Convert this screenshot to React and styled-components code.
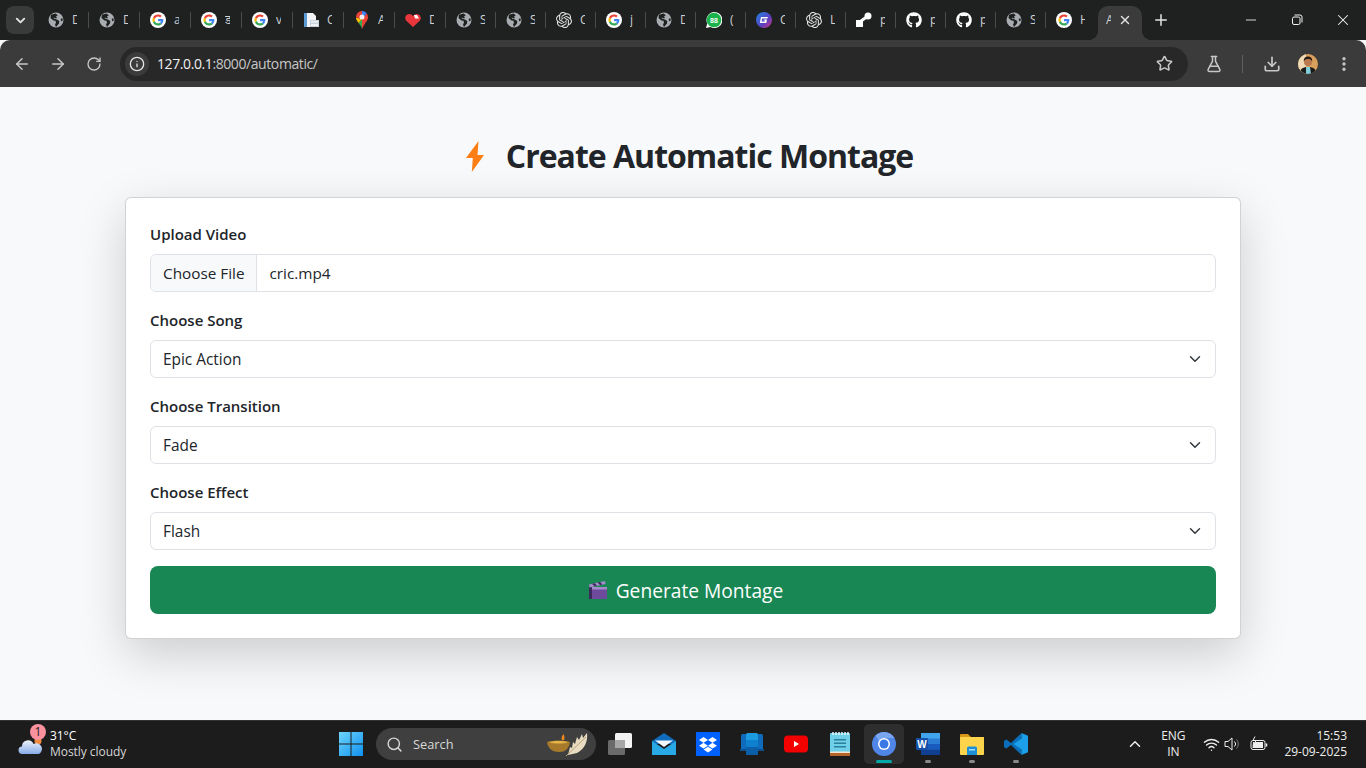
import React from "react";
import styled, { createGlobalStyle } from "styled-components";
import { SiOpenai } from "react-icons/si";
import { FaGithub } from "react-icons/fa";
import {
  ArrowLeft,
  ArrowRight,
  RotateCw,
  Info,
  Star,
  FlaskConical,
  Download,
  EllipsisVertical,
  ChevronDown,
  X,
  Plus,
  Minus,
  ChevronUp,
  Search,
  Wifi,
} from "lucide-react";

const UI_FONT = `"Open Sans", "Noto Sans", sans-serif`;

const GlobalStyle = createGlobalStyle`
  html, body { margin: 0; padding: 0; height: 100%; overflow: hidden; }
  body { font-family: ${UI_FONT}; background: #f8f9fa; color: #212529; }
  * { box-sizing: border-box; }
`;

const Screen = styled.div`
  height: 768px;
  display: flex;
  flex-direction: column;
  overflow: hidden;
`;

/* ---------- browser tabs ---------- */

const TabStrip = styled.div`
  height: 40px;
  flex: none;
  display: flex;
  align-items: center;
  background: #1f2120;
`;
const TabMenu = styled.div`
  width: 28px;
  height: 28px;
  margin: 0 4px 0 6px;
  border-radius: 8px;
  background: #393a3a;
  display: flex;
  align-items: center;
  justify-content: center;
  color: #e3e3e3;
`;
const Tab = styled.div`
  width: ${(p) => (p.$wide ? 51 : 50)}px;
  height: 40px;
  flex: none;
  display: flex;
  align-items: center;
  padding-left: 10px;
`;
const Favicon = styled.span`
  width: 16px;
  height: 16px;
  flex: none;
  display: flex;
  align-items: center;
  justify-content: center;
`;
const TabLetter = styled.span`
  width: 5px;
  margin-left: ${(p) => (p.$flush ? 0 : 8)}px;
  overflow: hidden;
  font-size: 12px;
  line-height: 16px;
  color: #d0d0d0;
  white-space: nowrap;
`;
const TabSep = styled.span`
  width: 1px;
  height: 16px;
  margin-left: auto;
  background: #4b4c4c;
`;
const ActiveTab = styled.div`
  position: relative;
  width: 44px;
  height: 34px;
  margin: 6px 0 0 2px;
  padding: 0 10px 6px 8px;
  flex: none;
  display: flex;
  align-items: center;
  justify-content: space-between;
  background: #3b3b3b;
  border-radius: 10px 10px 0 0;
  color: #e3e3e3;
  &::before,
  &::after {
    content: "";
    position: absolute;
    bottom: 0;
    width: 10px;
    height: 10px;
  }
  &::before {
    left: -10px;
    background: radial-gradient(circle at 0 0, transparent 10px, #3b3b3b 10.5px);
  }
  &::after {
    right: -10px;
    background: radial-gradient(circle at 100% 0, transparent 10px, #3b3b3b 10.5px);
  }
`;
const NewTab = styled.div`
  width: 24px;
  margin-left: 7px;
  display: flex;
  justify-content: center;
  color: #e3e3e3;
`;
const WindowButtons = styled.div`
  margin-left: auto;
  display: flex;
`;
const WindowButton = styled.div`
  width: 46px;
  height: 40px;
  display: flex;
  align-items: center;
  justify-content: center;
  color: #f2f2f2;
`;

/* ---------- browser toolbar ---------- */

const Toolbar = styled.div`
  height: 47px;
  flex: none;
  display: flex;
  align-items: center;
  padding-left: 8px;
  background: #3b3b3b;
  border-radius: 10px 10px 0 0;
`;
const NavButton = styled.div`
  width: 28px;
  height: 28px;
  margin-right: 8px;
  display: flex;
  align-items: center;
  justify-content: center;
  color: #c7c7c7;
`;
const Omnibox = styled.div`
  flex: 1;
  height: 34px;
  margin-left: 4px;
  padding: 0 15px 0 5px;
  display: flex;
  align-items: center;
  border-radius: 17px;
  background: #282828;
  color: #c7c7c7;
`;
const SiteInfo = styled.div`
  width: 24px;
  height: 24px;
  border-radius: 50%;
  background: #3b3b3b;
  display: flex;
  align-items: center;
  justify-content: center;
  color: #e3e3e3;
`;
const Url = styled.div`
  flex: 1;
  margin-left: 8px;
  font-size: 14px;
  letter-spacing: -0.41px;
  color: #c7c7c7;
`;
const Host = styled.span`
  color: #f1f1f1;
`;
const ToolActions = styled.div`
  width: 178px;
  flex: none;
  display: flex;
  align-items: center;
  color: #c7c7c7;
`;
const ToolIcon = styled.div`
  width: 20px;
  height: 20px;
  margin-left: ${(p) => p.$gap}px;
  display: flex;
  align-items: center;
  justify-content: center;
`;
const ToolSep = styled.span`
  width: 1px;
  height: 18px;
  margin-left: 18px;
  background: #5f5f5f;
`;

/* ---------- page ---------- */

const Main = styled.main`
  flex: 1;
  padding-top: 50px;
  background: #f8f9fa;
`;
const Title = styled.h2`
  margin: 0 0 22px;
  display: flex;
  justify-content: center;
  align-items: center;
  font-size: 32px;
  line-height: 38.4px;
  font-weight: 700;
  letter-spacing: -1px;
  color: #212529;
`;
const BoltBox = styled.span`
  width: 53px;
  height: 38px;
  flex: none;
  padding-left: 13px;
  display: flex;
  align-items: center;
`;
const Card = styled.form`
  width: 1116px;
  margin: 0 auto;
  padding: 24px;
  background: #fff;
  border: 1px solid rgba(0, 0, 0, 0.175);
  border-radius: 6px;
  box-shadow: 0 16px 48px rgba(0, 0, 0, 0.175);
`;
const Field = styled.div`
  margin-bottom: 16px;
`;
const Label = styled.label`
  display: block;
  margin-bottom: 8px;
  font-size: 15px;
  line-height: 24px;
  font-weight: 600;
  color: #212529;
`;
const FileControl = styled.div`
  height: 38px;
  display: flex;
  align-items: center;
  background: #fff;
  border: 1px solid #dee2e6;
  border-radius: 6px;
  overflow: hidden;
  font-size: 15.3px;
  color: #212529;
`;
const FileButton = styled.span`
  height: 100%;
  padding: 0 12px;
  display: flex;
  align-items: center;
  background: #f8f9fa;
  border-right: 1px solid #dee2e6;
`;
const FileName = styled.span`
  padding-left: 12px;
`;
const Select = styled.select`
  display: block;
  width: 100%;
  height: 38px;
  padding: 0 36px 0 12px;
  appearance: none;
  font-family: inherit;
  font-size: 15.4px;
  color: #212529;
  background-color: #fff;
  background-image: url("data:image/svg+xml,%3csvg xmlns='http://www.w3.org/2000/svg' viewBox='0 0 16 16'%3e%3cpath fill='none' stroke='%23343a40' stroke-linecap='round' stroke-linejoin='round' stroke-width='2' d='m2 5 6 6 6-6'/%3e%3c/svg%3e");
  background-repeat: no-repeat;
  background-position: right 12px center;
  background-size: 16px 12px;
  border: 1px solid #dee2e6;
  border-radius: 6px;
`;
const Submit = styled.button`
  width: 100%;
  height: 48px;
  padding: 0 0 0 5px;
  display: flex;
  align-items: center;
  justify-content: center;
  gap: 8px;
  border: 0;
  border-radius: 8px;
  background: #198754;
  color: #fff;
  font-family: inherit;
  font-size: 19.2px;
`;

/* ---------- windows taskbar ---------- */

const Taskbar = styled.footer`
  height: 48px;
  flex: none;
  padding-bottom: 1px;
  display: flex;
  align-items: center;
  background: #1c1c1c;
  border-top: 1px solid #333;
  color: #fff;
`;
const Weather = styled.div`
  position: relative;
  width: 339px;
  flex: none;
  padding-left: 18px;
  display: flex;
  align-items: center;
  gap: 7px;
`;
const Badge = styled.span`
  position: absolute;
  left: 30px;
  top: -4px;
  width: 16px;
  height: 16px;
  border-radius: 50%;
  background: #f9919e;
  color: #1c1c1c;
  font-size: 12px;
  line-height: 16px;
  text-align: center;
`;
const WeatherText = styled.div`
  font-size: 12px;
  line-height: 16px;
  letter-spacing: -0.05px;
`;
const Dim = styled.div`
  color: #d6d6d6;
`;
const Centre = styled.div`
  display: flex;
  align-items: center;
`;
const SearchPill = styled.div`
  width: 220px;
  height: 32px;
  margin: 0 2px 0 13px;
  padding: 0 4px 0 10px;
  display: flex;
  align-items: center;
  border-radius: 16px;
  background: #3f3f3f;
  color: #d8d8d8;
  font-size: 12.8px;
`;
const SearchLabel = styled.span`
  flex: 1;
  margin-left: 10px;
`;
const AppSlot = styled.div`
  position: relative;
  width: 40px;
  height: 40px;
  margin: 0 2px;
  display: flex;
  align-items: center;
  justify-content: center;
  border-radius: 5px;
  background: ${(p) => (p.$active ? "#2e2e2e" : "transparent")};
  &::after {
    content: "";
    display: ${(p) => (p.$state ? "block" : "none")};
    position: absolute;
    bottom: 1px;
    left: 50%;
    transform: translateX(-50%);
    width: ${(p) => (p.$state === "active" ? 16 : 6)}px;
    height: 3px;
    border-radius: 2px;
    background: ${(p) => (p.$state === "active" ? "#00a8a8" : "#8a8a8a")};
  }
`;
const Tray = styled.div`
  margin-left: auto;
  padding-right: 19px;
  display: flex;
  align-items: center;
  font-size: 12px;
  line-height: 16px;
  color: #eee;
`;
const Lang = styled.div`
  width: 30px;
  margin: 0 12px 0 14px;
  text-align: center;
`;
const TrayIcon = styled.span`
  width: 22px;
  margin-left: ${(p) => p.$gap || 0}px;
  display: flex;
  justify-content: center;
`;
const Clock = styled.div`
  margin-left: 14px;
  text-align: right;
`;

/* ---------- drawn favicons ---------- */

const Google = () => (
  <svg width="16" height="16" viewBox="0 0 16 16">
    <circle cx="8" cy="8" r="8" fill="#fff" />
    <g transform="translate(2.4 2.4) scale(0.233)">
      <path fill="#EA4335" d="M24 9.5c3.5 0 6.7 1.2 9.2 3.6l6.9-6.9C35.9 2.4 30.5 0 24 0 14.6 0 6.5 5.4 2.6 13.2l8 6.2C12.5 13.7 17.8 9.5 24 9.5z" />
      <path fill="#4285F4" d="M47 24.5c0-1.6-.1-3.1-.4-4.5H24v9h12.9c-.6 3-2.2 5.5-4.7 7.2l7.7 6C44.4 38 47 31.8 47 24.5z" />
      <path fill="#FBBC05" d="M10.5 28.6A14.5 14.5 0 0 1 10.5 19.4l-8-6.2a24 24 0 0 0 0 21.6z" />
      <path fill="#34A853" d="M24 48c6.5 0 11.9-2.1 15.9-5.8l-7.7-6c-2.2 1.500-4.900 2.300-8.200 2.300-6.200 0-11.500-4.200-13.400-9.900l-8 6.200C6.500 42.600 14.600 48 24 48z" />
    </g>
  </svg>
);

const Globe = () => (
  <svg width="16" height="16" viewBox="0 0 16 16">
    <circle cx="8" cy="8" r="7.5" fill="#a8abaf" />
    <path fill="#1f2120" d="M7.5 1.500 3 2.800 2.500 6 5.500 8.500l2 .3.5 2-1 1.700L8 15l3-3.500.3-2.500-3-1.800-1.800-.4L5.300 6l1.700-.3.5.8 1.500-.4L8 4.500l1.800-1.300zM14.500 6l-1.800 1 .5 2.200 1.500-.5z" />
  </svg>
);

const OpenAi = () => <SiOpenai size={16} color="#e4e4e4" />;

const GitHub = () => <FaGithub size={16} color="#fff" />;

const Doc = () => (
  <svg width="16" height="16" viewBox="0 0 16 16">
    <path fill="#f2f4f7" d="M1 1h9l3 3v11H1z" />
    <path fill="#5b9bd5" d="M1 1h3v14H1z" />
    <path fill="#c9d3de" d="M7 8h9v7H7z" />
    <path fill="#eef1f5" d="M8 9h7v1.500H8zM8 12h7v2H8z" />
  </svg>
);

const MapsPin = () => (
  <svg width="16" height="18" viewBox="0 0 16 18">
    <path fill="#34a853" d="M8 18c-.5-2.500-2-4-3.500-6L8 8z" />
    <path fill="#fbbc04" d="M4.500 12C3 10 2 8.500 2 6.500L8 8z" />
    <path fill="#4285f4" d="M8 0c2 0 3.800 1 4.800 2.500L8 8z" />
    <path fill="#ea4335" d="M12.800 2.500C13.600 3.500 14 5 14 6.500c0 2-1.500 4-3 6L8 18V8z" />
    <path fill="#ea4335" d="M3.200 2.500C4.300 1 6 0 8 0v8L2 6.500c0-1.500.5-3 1.200-4z" />
    <circle cx="8" cy="6" r="2.500" fill="#fff" opacity="0.9" />
  </svg>
);

const Heart = () => (
  <svg width="16" height="16" viewBox="0 0 16 16">
    <path fill="#e8363c" d="M8 15 1 8.500C-.5 6.500 0 2.500 4 2c1.700 0 3 .8 4 2 1-1.200 2.300-2 4-2 4 .5 4.500 4.500 3 6.500z" />
    <path fill="#fff" d="M9 3h3l2 3.500H10z" />
  </svg>
);

const WhatsApp = () => (
  <svg width="16" height="16" viewBox="0 0 16 16">
    <path fill="#fff" d="M0 16 1.200 11.500A8 8 0 1 1 4.500 15z" />
    <circle cx="8" cy="8" r="7.300" fill="#19b24b" />
    <text x="8" y="10.500" textAnchor="middle" fontSize="7" fontWeight="700" fill="#fff" fontFamily="Liberation Sans, sans-serif">88</text>
  </svg>
);

const GBadge = () => (
  <svg width="16" height="16" viewBox="0 0 16 16">
    <defs>
      <linearGradient id="gb" x1="0" y1="0" x2="1" y2="1">
        <stop offset="0" stopColor="#1e88e5" />
        <stop offset="0.6" stopColor="#5a3fc0" />
        <stop offset="1" stopColor="#e0357a" />
      </linearGradient>
    </defs>
    <circle cx="8" cy="8" r="8" fill="url(#gb)" />
    <path fill="#fff" d="M5 5h7l-.6 1.500H6.200L5.600 9.500h3.200l.2-1H7.500l.3-1H11l-.7 3.500H3.800z" />
  </svg>
);

const Notion = () => (
  <svg width="16" height="16" viewBox="0 0 16 16">
    <path fill="#fff" d="M0 8h7v7H0z" />
    <path d="M5 9 12 4" stroke="#fff" strokeWidth="3" />
    <circle cx="12" cy="4" r="3.500" fill="#fff" />
  </svg>
);

const TABS = [
  [Globe, "D"], [Globe, "D"], [Google, "a"], [Google, "ड"], [Google, "v"],
  [Doc, "C"], [MapsPin, "A"], [Heart, "D"], [Globe, "S"], [Globe, "S"],
  [OpenAi, "C"], [Google, "j"], [Globe, "D"], [WhatsApp, "("], [GBadge, "C"],
  [OpenAi, "L"], [Notion, "p"], [GitHub, "p"], [GitHub, "p"], [Globe, "S"],
  [Google, "H"],
];

const Restore = () => (
  <svg width="12" height="12" viewBox="0 0 12 12" fill="none" stroke="#f2f2f2">
    <rect x="1.500" y="3" width="7.500" height="7.500" rx="1.500" />
    <path d="M3.500 1h5.500a2 2 0 0 1 2 2v5.500" />
  </svg>
);

const Avatar = () => (
  <svg width="20" height="20" viewBox="0 0 20 20">
    <defs>
      <clipPath id="av"><circle cx="10" cy="10" r="10" /></clipPath>
    </defs>
    <g clipPath="url(#av)">
      <rect width="20" height="20" fill="#d9a05c" />
      <rect width="8" height="20" fill="#f0d9b5" />
      <path fill="#1b1b1b" d="M2 20c0-5 2-7 8-7s8 2 8 7z" />
      <path fill="#7fd0d8" d="M8 13h4l1 7H8z" />
      <circle cx="10" cy="8" r="4" fill="#b97a50" />
      <path fill="#2b1b12" d="M5.800 7.500C5.500 3.500 8 2.500 10 2.500s4.500 1 4.200 5c-1-2-2.500-2.500-4.200-2.500s-3.200.5-4.200 2.500z" />
    </g>
  </svg>
);

const Bolt = () => (
  <svg width="18" height="31" viewBox="0 0 18 31">
    <path fill="#fd7e14" d="M12.500 0 0 17h6.800L5.800 31 18 14h-6.500z" />
  </svg>
);

const Clapper = () => (
  <svg width="20" height="20" viewBox="0 0 20 20">
    <path fill="#6d4a9c" d="M1 7h18v12H1z" />
    <path fill="#3d2a5c" d="M1 7h3v12H1z" />
    <path fill="#a48ccb" d="M1 4.500 17 1l.6 3L1.600 7.500z" />
    <path fill="#3d2a5c" d="M4 3.800 6.500 6.200 9 5.600 6.600 3.200zM9.500 2.600 12 5l2.500-.5L12 2z" />
    <path fill="#a48ccb" d="M4 7h15v2.500H4z" />
  </svg>
);

/* ---------- drawn taskbar apps ---------- */

const Cloud = () => (
  <svg width="25" height="22" viewBox="0 0 25 22">
    <defs>
      <linearGradient id="cl" x1="0" y1="0" x2="0" y2="1">
        <stop offset="0" stopColor="#eef2fb" />
        <stop offset="1" stopColor="#86abe8" />
      </linearGradient>
    </defs>
    <circle cx="20" cy="8" r="3.500" fill="#f08a3c" />
    <path fill="url(#cl)" d="M4.500 21a3.700 3.700 0 0 1-.5-7.400A6 6 0 0 1 15.500 11a4.500 4.500 0 0 1 5.500 10z" />
  </svg>
);

const WinLogo = () => (
  <svg width="24" height="24" viewBox="0 0 24 24">
    <defs>
      <linearGradient id="wl" x1="0" y1="0" x2="1" y2="1">
        <stop offset="0" stopColor="#6fd6fb" />
        <stop offset="1" stopColor="#0f8fee" />
      </linearGradient>
    </defs>
    <path fill="url(#wl)" d="M0 0h11.500v11.500H0zM12.500 0H24v11.500H12.500zM0 12.500h11.500V24H0zM12.500 12.500H24V24H12.500z" />
  </svg>
);

const Diya = () => (
  <svg width="46" height="26" viewBox="0 0 46 26">
    <path fill="#e9dcc0" d="M22 24 24 16l2 1 1-6 2 2 2-7 2 3 3-6 1 4 4-5c1 8-2 16-10 20z" />
    <path stroke="#b7a37a" d="M20 25 40 6" fill="none" />
    <path fill="#a67a2a" d="M1 11c6-2 18-2 23 0-1 7-5 10-11 10S2 18 1 11z" />
    <path fill="#e5b54a" d="M3 11c5-1.500 15-1.500 19 0-4 2-15 2-19 0z" />
    <path fill="#f08a1c" d="M16 9c-1-2 0-4 1.500-6 .8 2 1.500 4 .5 6z" />
  </svg>
);

const TaskView = () => (
  <svg width="24" height="24" viewBox="0 0 24 24">
    <rect x="0" y="8" width="17" height="15" rx="1.500" fill="#6a6a6a" />
    <rect x="7" y="1" width="17" height="15" rx="1.500" fill="#f3f3f3" />
    <rect x="7" y="8" width="10" height="8" fill="#a6a6a6" />
  </svg>
);

const Mail = () => (
  <svg width="24" height="24" viewBox="0 0 24 24">
    <path fill="#0f6cbd" d="M0 9 12 1l12 8v3H0z" />
    <path fill="#29a8e8" d="M0 9v14h24V9L12 17z" />
    <path fill="#f2f6fb" d="M3 8.500h18L12 15z" />
  </svg>
);

const Dropbox = () => (
  <svg width="24" height="24" viewBox="0 0 24 24">
    <rect width="24" height="24" fill="#0061fe" />
    <path fill="#fff" d="M7.500 5 12 7.900 7.500 10.800 3 7.900zM16.500 5 21 7.900l-4.500 2.900L12 7.900zM3 13.700l4.500-2.900 4.500 2.900-4.500 2.900zM16.500 10.800l4.500 2.900-4.500 2.900-4.500-2.900zM7.600 17.600 12 14.800l4.400 2.800L12 20.400z" />
  </svg>
);

const Device = () => (
  <svg width="24" height="24" viewBox="0 0 24 24">
    <rect x="1" y="2" width="22" height="16" rx="1.500" fill="#0f6cbd" />
    <rect x="0" y="17" width="24" height="2" fill="#0a4f8f" />
    <rect x="6" y="1" width="12" height="22" rx="1.500" fill="#1d9be0" />
    <rect x="6" y="8" width="12" height="15" fill="#0f7fd0" />
    <rect x="6" y="15" width="12" height="8" fill="#0a5fa8" />
  </svg>
);

const YouTube = () => (
  <svg width="24" height="18" viewBox="0 0 24 18">
    <rect width="24" height="17" y="0.500" rx="4" fill="#f40000" />
    <path fill="#fff" d="M10 6v6l5-3z" />
  </svg>
);

const Notepad = () => (
  <svg width="20" height="24" viewBox="0 0 20 24">
    <rect y="1" width="20" height="23" rx="1" fill="#6ed0e8" />
    <rect y="20.500" width="20" height="3.500" fill="#b5652a" />
    <rect y="19.500" width="20" height="1.500" fill="#f1e6d0" />
    <path stroke="#e8f8fc" strokeWidth="1.500" d="M3 0v3M6 0v3M9 0v3M12 0v3M15 0v3M18 0v3" />
    <path fill="#2a7f9e" d="M4 7h12v1.500H4zM4 10.500h12V12H4zM4 14h12v1.500H4z" />
  </svg>
);

const ChromeDev = () => (
  <svg width="24" height="24" viewBox="0 0 24 24">
    <circle cx="12" cy="12" r="12" fill="#4f86e8" />
    <path fill="#7aa5ef" d="M12 0a12 12 0 0 1 10.400 6H12a6 6 0 0 0-5.200 3L3.500 3.500A12 12 0 0 1 12 0z" />
    <circle cx="12" cy="12" r="6" fill="#fff" />
    <circle cx="12" cy="12" r="4.500" fill="#3a78e6" />
  </svg>
);

const Word = () => (
  <svg width="24" height="24" viewBox="0 0 24 24">
    <rect x="5" y="1" width="19" height="22" rx="1.500" fill="#2b7cd3" />
    <rect x="5" y="1" width="19" height="5.500" fill="#41a5ee" />
    <rect x="5" y="12" width="19" height="5.500" fill="#185abd" />
    <rect x="5" y="17.500" width="19" height="5.500" fill="#103f91" />
    <rect x="0" y="6" width="12" height="12" rx="1" fill="#1450a8" />
    <text x="6" y="15.500" textAnchor="middle" fontSize="10" fontWeight="700" fill="#fff" fontFamily="Liberation Sans, sans-serif">W</text>
  </svg>
);

const Folder = () => (
  <svg width="24" height="24" viewBox="0 0 24 24">
    <path fill="#d69a16" d="M0 3a1 1 0 0 1 1-1h7l3 3h13v5H0z" />
    <rect y="5" width="24" height="18" rx="1" fill="#fbd44c" />
    <path fill="#1c8fd6" d="M7 16a1.500 1.500 0 0 1 1.500-1.500h7A1.500 1.500 0 0 1 17 16v7H7z" />
    <rect x="9" y="17" width="6" height="1.500" fill="#9fdcf8" />
  </svg>
);

const VsCode = () => (
  <svg width="24" height="24" viewBox="0 0 24 24">
    <path fill="#0a6fb8" d="M17.500 1 7 11 2.500 7.500 0 8.700v6.600l2.500 1.200L7 13l10.500 10z" />
    <path fill="#1a9fe8" d="M17.500 1 24 3.800v16.400L17.500 23V6.500L9.500 12l8 5.500z" />
  </svg>
);

const APPS = [
  [TaskView], [Mail], [Dropbox], [Device], [YouTube], [Notepad],
  [ChromeDev, "active"], [Word, "open"], [Folder, "open"], [VsCode, "open"],
];

const Volume = () => (
  <svg width="18" height="16" viewBox="0 0 18 16" fill="none" stroke="#eee" strokeWidth="1">
    <path d="M1 5.500h3L8 2v12l-4-3.500H1z" />
    <path d="M10.500 5.500a3.500 3.500 0 0 1 0 5" />
    <path d="M12.500 3.500a6.500 6.500 0 0 1 0 9" stroke="#777" />
  </svg>
);

const Battery = () => (
  <svg width="18" height="16" viewBox="0 0 18 16" fill="none" stroke="#eee">
    <rect x="1" y="4.500" width="14" height="9" rx="2" />
    <path d="M3 6h10v6H2.500z" fill="#eee" stroke="none" />
    <path d="M16.500 7.500v3" strokeWidth="1.500" />
    <path d="M5 0.500 3 4.500h3L4.500 7.500" stroke="#eee" fill="#1c1c1c" />
  </svg>
);

export default function App() {
  return (
    <Screen>
      <GlobalStyle />
      <TabStrip>
        <TabMenu>
          <ChevronDown size={15} strokeWidth={3} />
        </TabMenu>
        {TABS.map(([Icon, letter], i) => (
          <Tab key={i} $wide={i < 8}>
            <Favicon>
              <Icon />
            </Favicon>
            <TabLetter>{letter}</TabLetter>
            {i < TABS.length - 1 && <TabSep />}
          </Tab>
        ))}
        <ActiveTab>
          <TabLetter $flush>A</TabLetter>
          <X size={14} strokeWidth={2.5} />
        </ActiveTab>
        <NewTab>
          <Plus size={18} strokeWidth={2} />
        </NewTab>
        <WindowButtons>
          <WindowButton>
            <Minus size={16} strokeWidth={1.3} />
          </WindowButton>
          <WindowButton>
            <Restore />
          </WindowButton>
          <WindowButton>
            <X size={18} strokeWidth={1.4} />
          </WindowButton>
        </WindowButtons>
      </TabStrip>

      <Toolbar>
        <NavButton>
          <ArrowLeft size={18} />
        </NavButton>
        <NavButton>
          <ArrowRight size={18} />
        </NavButton>
        <NavButton>
          <RotateCw size={16} />
        </NavButton>
        <Omnibox>
          <SiteInfo>
            <Info size={16} />
          </SiteInfo>
          <Url>
            <Host>127.0.0.1</Host>:8000/automatic/
          </Url>
          <Star size={17} strokeWidth={2.2} />
        </Omnibox>
        <ToolActions>
          <ToolIcon $gap={16}>
            <FlaskConical size={18} />
          </ToolIcon>
          <ToolSep />
          <ToolIcon $gap={19}>
            <Download size={18} strokeWidth={2.3} />
          </ToolIcon>
          <ToolIcon $gap={16}>
            <Avatar />
          </ToolIcon>
          <ToolIcon $gap={16}>
            <EllipsisVertical size={18} strokeWidth={2.5} />
          </ToolIcon>
        </ToolActions>
      </Toolbar>

      <Main>
        <Title>
          <BoltBox>
            <Bolt />
          </BoltBox>
          Create Automatic Montage
        </Title>
        <Card>
          <Field>
            <Label>Upload Video</Label>
            <FileControl>
              <FileButton>Choose File</FileButton>
              <FileName>cric.mp4</FileName>
            </FileControl>
          </Field>
          <Field>
            <Label>Choose Song</Label>
            <Select defaultValue="Epic Action">
              <option>Epic Action</option>
            </Select>
          </Field>
          <Field>
            <Label>Choose Transition</Label>
            <Select defaultValue="Fade">
              <option>Fade</option>
            </Select>
          </Field>
          <Field>
            <Label>Choose Effect</Label>
            <Select defaultValue="Flash">
              <option>Flash</option>
            </Select>
          </Field>
          <Submit type="button">
            <Clapper />
            Generate Montage
          </Submit>
        </Card>
      </Main>

      <Taskbar>
        <Weather>
          <Cloud />
          <Badge>1</Badge>
          <WeatherText>
            <div>31°C</div>
            <Dim>Mostly cloudy</Dim>
          </WeatherText>
        </Weather>
        <Centre>
          <WinLogo />
          <SearchPill>
            <Search size={17} />
            <SearchLabel>Search</SearchLabel>
            <Diya />
          </SearchPill>
          {APPS.map(([Icon, state], i) => (
            <AppSlot key={i} $active={state === "active"} $state={state}>
              <Icon />
            </AppSlot>
          ))}
        </Centre>
        <Tray>
          <ChevronUp size={18} />
          <Lang>
            ENG
            <br />
            IN
          </Lang>
          <TrayIcon>
            <Wifi size={17} />
          </TrayIcon>
          <TrayIcon>
            <Volume />
          </TrayIcon>
          <TrayIcon $gap={4}>
            <Battery />
          </TrayIcon>
          <Clock>
            15:53
            <br />
            29-09-2025
          </Clock>
        </Tray>
      </Taskbar>
    </Screen>
  );
}
